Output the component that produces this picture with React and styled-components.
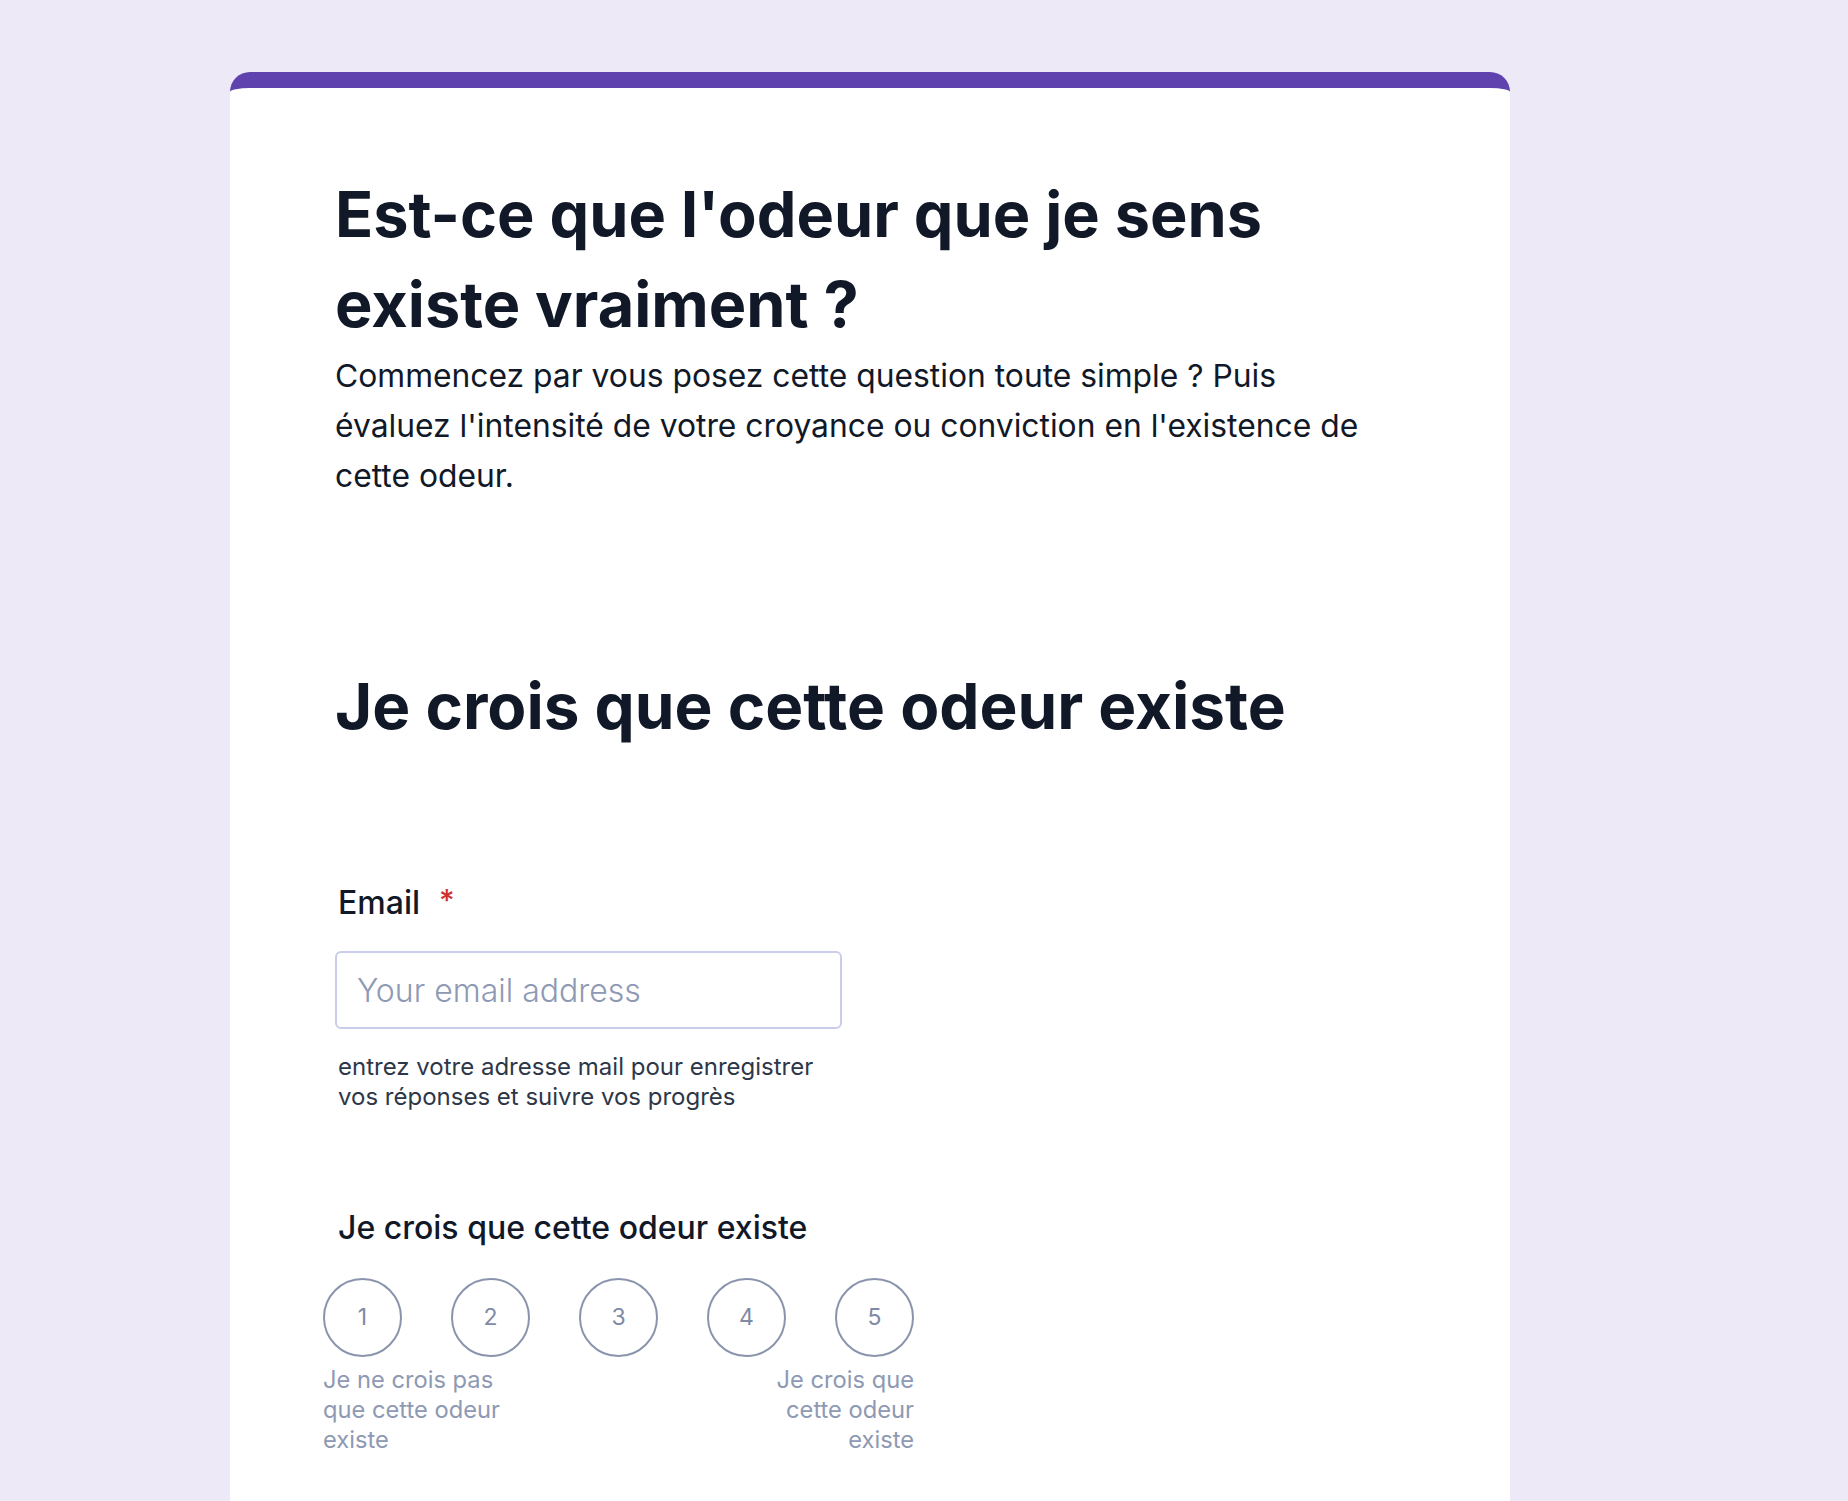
import styled, { createGlobalStyle } from "styled-components";

const GlobalStyle = createGlobalStyle`
  * {
    box-sizing: border-box;
  }
  body {
    margin: 0;
    background: #ede9f7;
    font-family: Inter, "Noto Sans", "Liberation Sans", sans-serif;
    color: #111827;
  }
`;

const Page = styled.div`
  min-height: 1501px;
  padding: 72px 0 0 230px;
`;

const Card = styled.main`
  width: 1280px;
  min-height: 1429px;
  background: #ffffff;
  border-top: 16px solid #5f42ae;
  border-radius: 20px 20px 0 0;
  padding: 81px 125px 80px 105px;
`;

const Title = styled.h1`
  margin: 0;
  font-size: 63px;
  line-height: 90px;
  font-weight: 700;
  color: #111827;
`;

const Description = styled.p`
  margin: 2px 0 0;
  font-size: 31.8px;
  line-height: 50px;
  font-weight: 400;
  color: #111827;
`;

const SectionTitle = styled.h2`
  margin: 160px 0 0;
  font-size: 63.8px;
  line-height: 90px;
  font-weight: 700;
  color: #111827;
`;

const Field = styled.div`
  display: flex;
  flex-direction: column;
  margin-top: ${({ $top }) => $top}px;
`;

const Label = styled.label`
  display: flex;
  align-items: flex-start;
  gap: 19px;
  padding-left: 3px;
  font-size: 32px;
  line-height: 40px;
  font-weight: 500;
  color: #111827;
`;

const Required = styled.span`
  color: #d32f2f;
  font-size: 30px;
  line-height: 34px;
`;

const Input = styled.input`
  margin-top: 28px;
  width: 507px;
  height: 78px;
  padding: 0 20px;
  border: 2px solid #c9cde9;
  border-radius: 6px;
  font-family: inherit;
  font-size: 32px;
  font-weight: 300;
  color: #111827;
  outline: none;

  &::placeholder {
    color: #8e99b3;
  }
`;

const Help = styled.p`
  margin: 23px 0 0;
  width: 507px;
  padding-left: 3px;
  font-size: 24px;
  line-height: 30px;
  color: #2d3748;
`;

const Scale = styled.div`
  margin: 30px 0 0 -12px;
  width: 591px;
  display: flex;
  flex-direction: column;
  gap: 8px;
`;

const Circles = styled.div`
  display: flex;
  justify-content: space-between;
`;

const Circle = styled.button`
  width: 79px;
  height: 79px;
  border-radius: 50%;
  border: 2px solid #8a94ad;
  background: #ffffff;
  display: flex;
  align-items: center;
  justify-content: center;
  padding: 0 0 2px;
  font-family: inherit;
  font-size: 23px;
  color: #7f8aa5;
  cursor: pointer;
`;

const Ends = styled.div`
  display: flex;
  justify-content: space-between;
`;

const EndLabel = styled.span`
  width: 190px;
  font-size: 23.7px;
  line-height: 30px;
  color: #8e99b3;
  text-align: ${({ $align }) => $align};
`;

export default function App() {
  return (
    <>
      <GlobalStyle />
      <Page>
        <Card>
          <Title>Est-ce que l'odeur que je sens existe vraiment ?</Title>
          <Description>
            Commencez par vous posez cette question toute simple ? Puis
            évaluez l'intensité de votre croyance ou conviction en l'existence
            de cette odeur.
          </Description>

          <SectionTitle>Je crois que cette odeur existe</SectionTitle>

          <Field $top={132}>
            <Label htmlFor="email">
              Email <Required>*</Required>
            </Label>
            <Input id="email" type="email" placeholder="Your email address" />
            <Help>
              entrez votre adresse mail pour enregistrer vos réponses et suivre
              vos progrès
            </Help>
          </Field>

          <Field $top={96}>
            <Label>Je crois que cette odeur existe</Label>
            <Scale>
              <Circles>
                {[1, 2, 3, 4, 5].map((n) => (
                  <Circle key={n} type="button">
                    {n}
                  </Circle>
                ))}
              </Circles>
              <Ends>
                <EndLabel $align="left">
                  Je ne crois pas que cette odeur existe
                </EndLabel>
                <EndLabel $align="right">
                  Je crois que cette odeur existe
                </EndLabel>
              </Ends>
            </Scale>
          </Field>
        </Card>
      </Page>
    </>
  );
}
